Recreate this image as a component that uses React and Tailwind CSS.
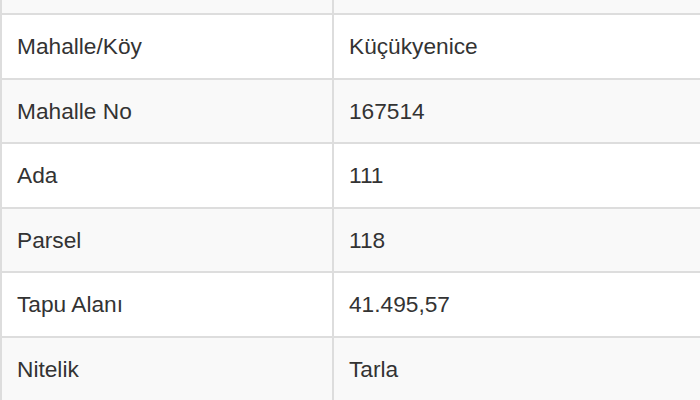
const rows = [
  ['Mahalle/Köy', 'Küçükyenice'],
  ['Mahalle No', '167514'],
  ['Ada', '111'],
  ['Parsel', '118'],
  ['Tapu Alanı', '41.495,57'],
  ['Nitelik', 'Tarla'],
];

export default function App() {
  return (
    <div className="w-[700px] h-[400px] overflow-hidden bg-white font-['Liberation_Sans',Arial,sans-serif] text-[22.7px] text-[#333]">
      <div className="border-l-2 border-[#ddd]">
        <div className="flex h-[13px] bg-[#f9f9f9]">
          <div className="w-[332px] border-r-2 border-[#ddd]" />
          <div className="flex-1" />
        </div>
        {rows.map(([label, value], i) => (
          <div
            key={label}
            className={
              'flex h-[64.5px] border-t-2 border-[#ddd] ' +
              (i % 2 === 0 ? 'bg-white' : 'bg-[#f9f9f9]')
            }
          >
            <div className="w-[332px] border-r-2 border-[#ddd] pl-[15px] flex items-center">{label}</div>
            <div className="flex-1 pl-[15px] flex items-center">{value}</div>
          </div>
        ))}
      </div>
    </div>
  );
}
